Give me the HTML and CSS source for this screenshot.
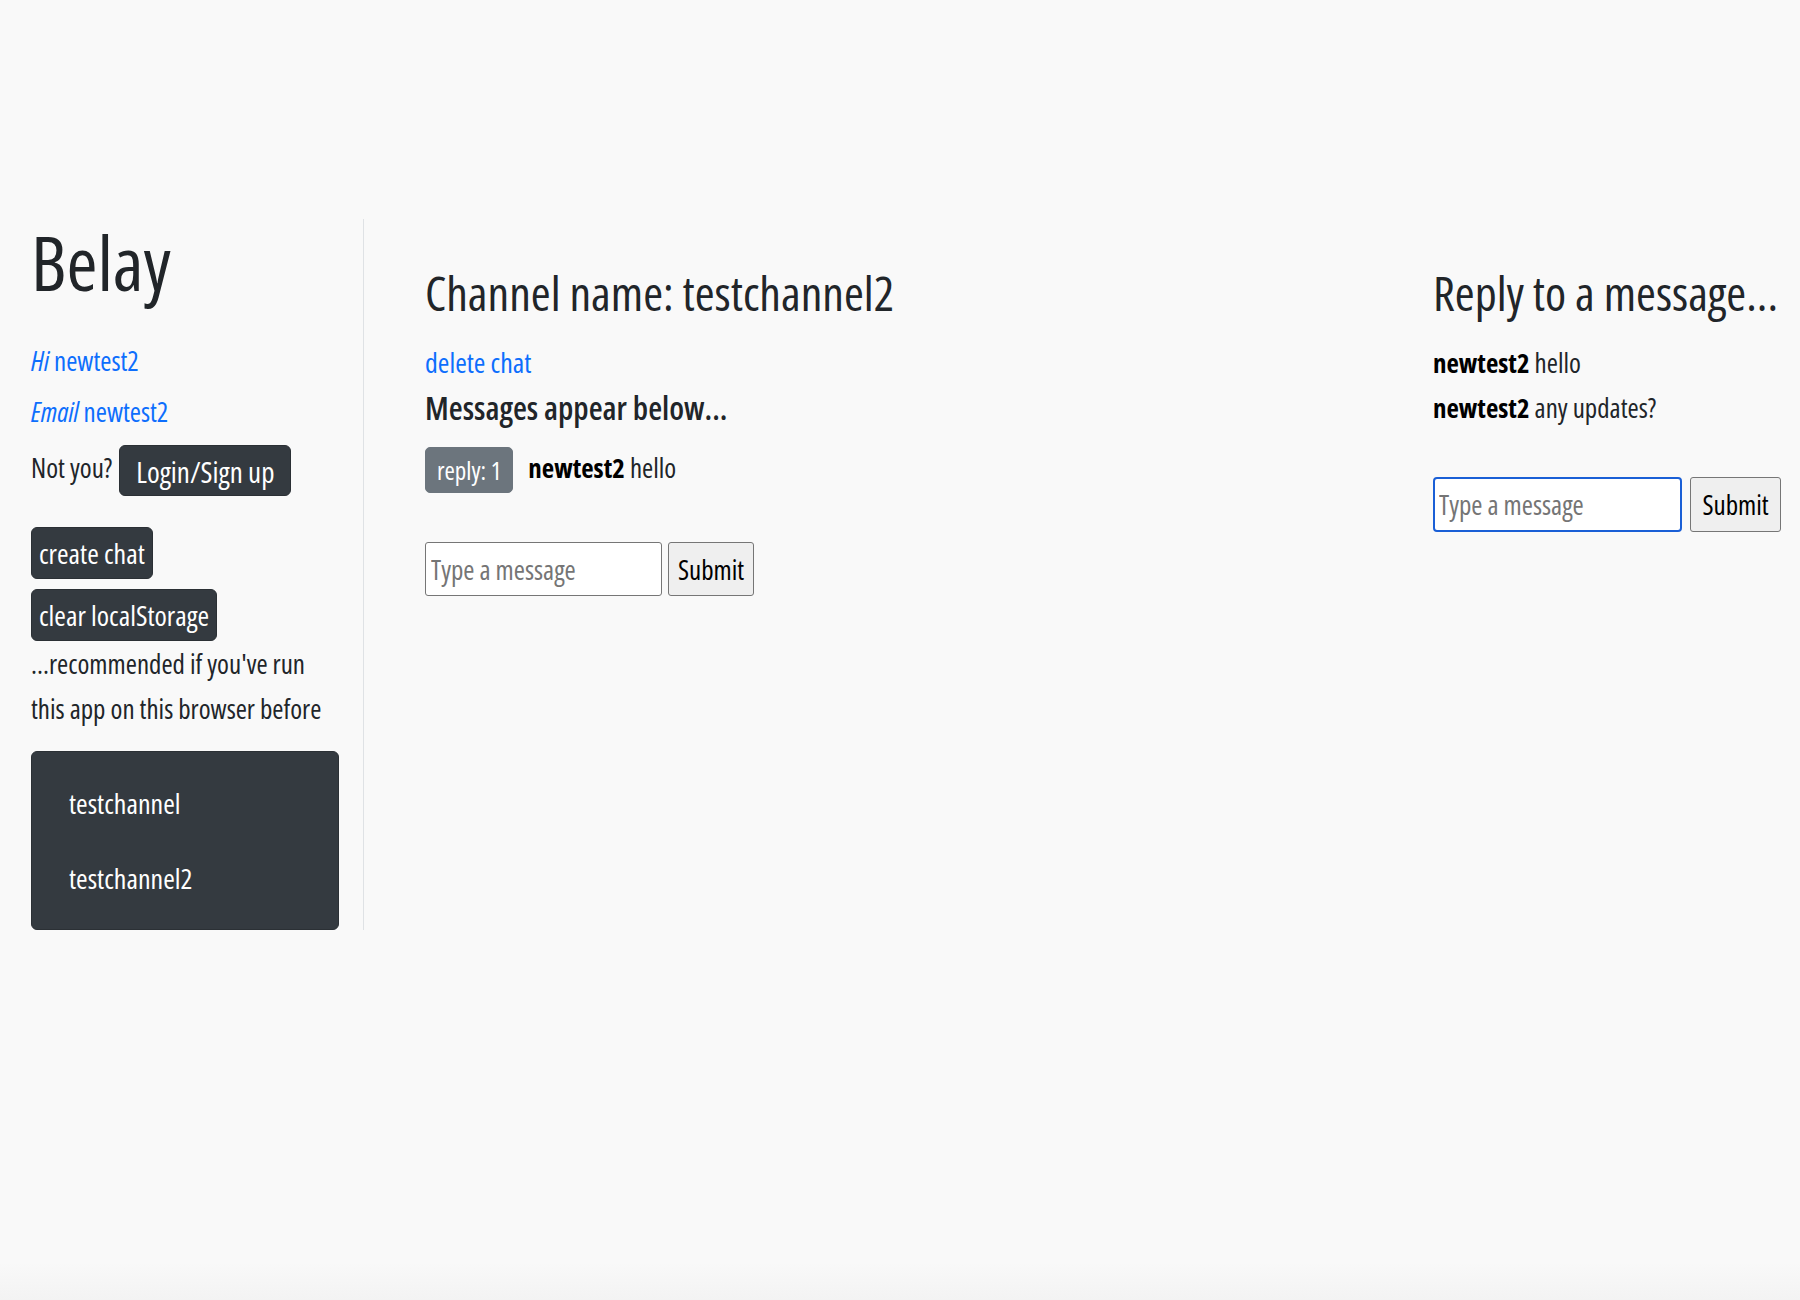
FILE: index.html
```html
<!DOCTYPE html>
<html lang="en">
<head>
<meta charset="utf-8">
<title>Belay</title>
<link rel="stylesheet" href="styles.css">
</head>
<body>
<div class="app">
  <aside class="sidebar">
    <h1 class="brand">Belay</h1>
    <p class="user-line"><a href="#"><em>Hi</em> newtest2</a></p>
    <p class="user-line"><a href="#"><em>Email</em> newtest2</a></p>
    <div class="not-you">
      <span class="not-you-text">Not you?</span>
      <button class="btn-dark btn-login">Login/Sign up</button>
    </div>
    <div class="actions">
      <button class="btn-dark btn-action">create chat</button>
      <button class="btn-dark btn-action">clear localStorage</button>
    </div>
    <p class="hint">...recommended if you've run this app on this browser before</p>
    <nav class="channels">
      <a href="#" class="channel-link">testchannel</a>
      <a href="#" class="channel-link">testchannel2</a>
    </nav>
  </aside>

  <main class="channel">
    <h2 class="heading">Channel name: testchannel2</h2>
    <a href="#" class="delete-link">delete chat</a>
    <h4 class="subheading">Messages appear below...</h4>
    <div class="message-row">
      <button class="badge-reply">reply: 1</button>
      <span class="message"><b>newtest2</b> hello</span>
    </div>
    <form class="composer">
      <input class="composer-input" type="text" placeholder="Type a message">
      <button class="composer-submit" type="button">Submit</button>
    </form>
  </main>

  <section class="thread">
    <h2 class="heading">Reply to a message...</h2>
    <p class="reply-line reply-first"><b>newtest2</b> hello</p>
    <p class="reply-line"><b>newtest2</b> any updates?</p>
    <form class="composer composer-thread">
      <input class="composer-input is-focused" type="text" placeholder="Type a message">
      <button class="composer-submit" type="button">Submit</button>
    </form>
  </section>
</div>
</body>
</html>
```

FILE: styles.css
```css
* { box-sizing: border-box; }

html, body {
  margin: 0;
  padding: 0;
}

body {
  width: 1800px;
  height: 1300px;
  overflow: hidden;
  background: linear-gradient(to bottom, #f9f9f9 0, #f9f9f9 1262px, #f3f3f3 1300px);
  color: #212529;
  font-family: "Open Sans", sans-serif;
  font-stretch: 75%;
  font-size: 27px;
  font-weight: 450;
}

button, input {
  font-family: inherit;
  font-stretch: inherit;
  font-weight: inherit;
}

.app {
  display: flex;
  align-items: flex-start;
  padding-top: 219px;
}

/* ---------- sidebar ---------- */
.sidebar {
  width: 364px;
  flex: none;
  padding: 0 24px 0 31px;
  border-right: 1px solid #dfe2e5;
}

.brand {
  margin: 0 0 30px;
  font-size: 75px;
  line-height: 86px;
  font-weight: 450;
}

.user-line {
  margin: 0;
  line-height: 51px;
}

.user-line a {
  color: #0d6efd;
  text-decoration: none;
}

.not-you {
  display: flex;
  align-items: flex-start;
  gap: 7px;
  margin-top: 8px;
  white-space: nowrap;
}

.not-you-text {
  line-height: 51px;
  margin-top: -3px;
}

.btn-dark {
  border: 1px solid #2b3035;
  background: #343a40;
  color: #fff;
  border-radius: 6px;
  cursor: pointer;
  white-space: nowrap;
}

.btn-login {
  height: 51px;
  padding: 3px 16px 0;
  font-size: 29px;
  line-height: 46px;
}

.actions {
  display: flex;
  flex-direction: column;
  align-items: flex-start;
  gap: 10px;
  margin-top: 31px;
}

.btn-action {
  height: 52px;
  padding: 0 7px;
  font-size: 28px;
  line-height: 50px;
}

.hint {
  margin: 0 0 20px;
  line-height: 45px;
}

.channels {
  display: flex;
  flex-direction: column;
  padding: 14px 0 13px 37px;
  background: #343a40;
  border: 1px solid #2b3035;
  border-radius: 6px;
}

.channel-link {
  color: #fff;
  text-decoration: none;
  font-size: 28px;
  line-height: 75px;
}

/* ---------- channel column ---------- */
.channel {
  flex: 1;
  padding: 45px 0 0 61px;
}

.heading {
  margin: 0;
  font-size: 48px;
  line-height: 58px;
  font-weight: 450;
  white-space: nowrap;
}

.delete-link {
  display: block;
  margin-top: 18px;
  color: #0d6efd;
  text-decoration: none;
  font-size: 28px;
  line-height: 45px;
}

.subheading {
  margin: 3px 0 0;
  font-size: 32px;
  line-height: 40px;
  font-weight: 560;
}

.message-row {
  display: flex;
  align-items: flex-start;
  gap: 15px;
  margin-top: 19px;
}

.badge-reply {
  height: 46px;
  padding: 0 11px;
  border: 1px solid #6c757d;
  border-radius: 5px;
  background: #6c757d;
  color: #fff;
  font-size: 25px;
  line-height: 44px;
}

.message {
  line-height: 42px;
}

.message b, .reply-line b {
  color: #000;
  font-weight: 700;
}

.composer {
  display: flex;
  gap: 6px;
  margin-top: 49px;
}

.composer-input {
  width: 237px;
  height: 54px;
  padding: 0 5px;
  border: 1px solid #767676;
  border-radius: 3px;
  background: #fff;
  font-size: 27px;
  color: #212529;
}

.composer-input::placeholder {
  color: #757575;
}

.composer-submit {
  width: 86px;
  height: 54px;
  padding: 0;
  border: 1px solid #767676;
  border-radius: 3px;
  background: #efefef;
  color: #000;
  font-size: 27px;
}

/* ---------- thread column ---------- */
.thread {
  width: 367px;
  flex: none;
  padding-top: 45px;
  white-space: nowrap;
}

.reply-line {
  margin: 0;
  line-height: 45px;
}

.reply-first {
  margin-top: 18px;
}

.composer-thread {
  gap: 8px;
  margin-top: 47px;
}

.composer-thread .composer-input {
  width: 249px;
  height: 55px;
}

.composer-thread .composer-submit {
  width: 91px;
  height: 55px;
}

.is-focused {
  border: 2px solid #1a5fd6;
  border-radius: 4px;
  padding-left: 4px;
}
```
